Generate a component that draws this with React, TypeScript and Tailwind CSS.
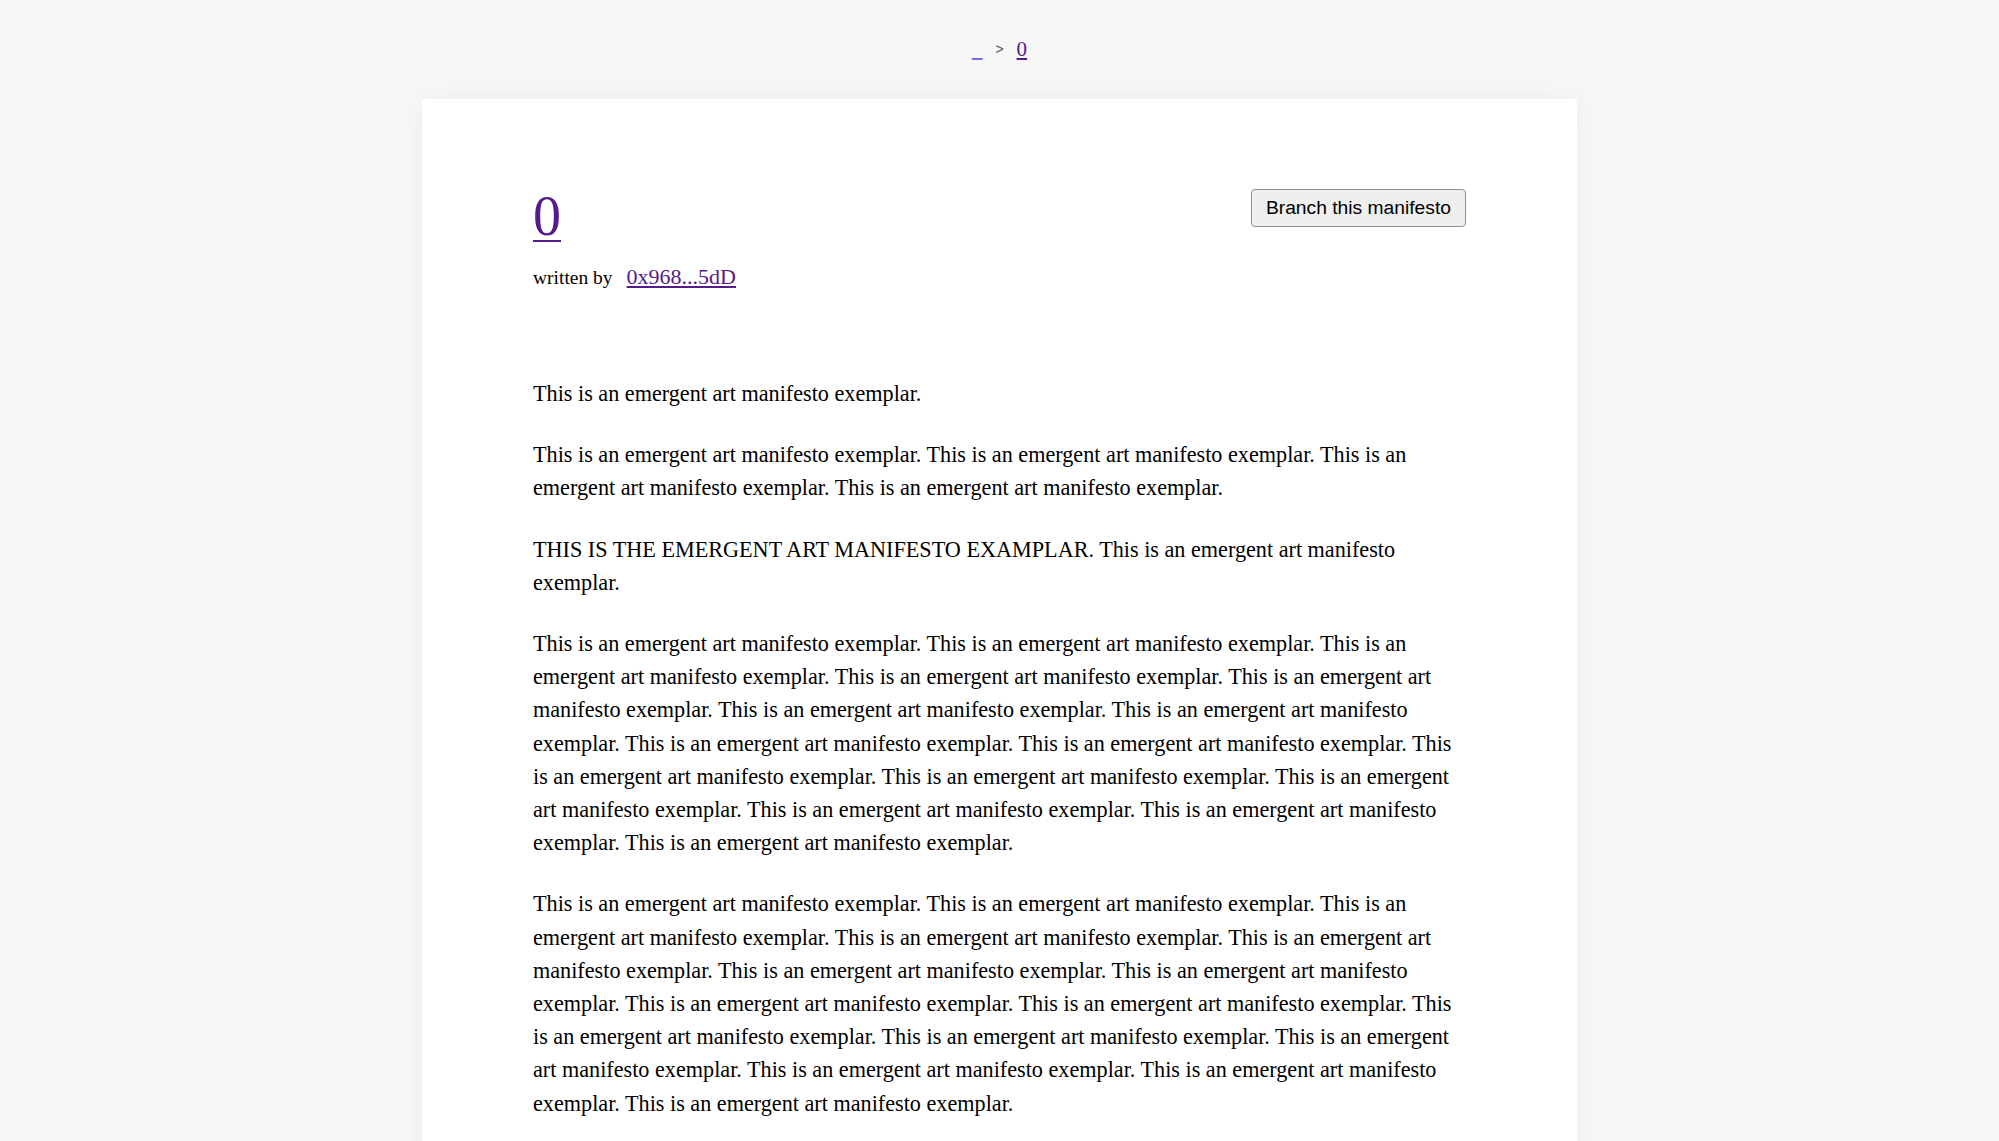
import React from "react";

const S = "This is an emergent art manifesto exemplar.";
const rep = (n: number) => Array.from({ length: n }, () => S).join(" ");

export default function App() {
  const serif = { fontFamily: '"Liberation Serif", "Times New Roman", serif' };
  const paragraphs = [
    rep(1),
    rep(4),
    "THIS IS THE EMERGENT ART MANIFESTO EXAMPLAR. " + rep(1),
    rep(15),
    rep(15),
  ];
  return (
    <div className="min-h-screen bg-[#f7f7f7] text-black" style={serif}>
      <nav className="flex h-[99px] items-start justify-center pt-[37px] text-[21px] leading-[24px]">
        <a href="#" className="text-[#6f6ff0] underline">_</a>
        <span
          className="mx-[13px] text-[14px] text-[#555]"
          style={{ fontFamily: '"Liberation Sans", Arial, sans-serif' }}
        >
          &gt;
        </span>
        <a href="#" className="text-[#551a8b] underline">0</a>
      </nav>
      <main className="mx-auto w-[1155px] bg-white px-[111px] pt-[89px] pb-[60px] shadow-[0_0_24px_rgba(0,0,0,0.05)]">
        <div className="flex items-start justify-between">
          <div>
            <h1 className="text-[56px] leading-[56px]">
              <a href="#" className="text-[#551a8b] underline decoration-[2px] underline-offset-[5px]">0</a>
            </h1>
            <div className="mt-[16px] flex items-baseline leading-[33px]">
              <span className="text-[19.5px]">written by</span>
              <a href="#" className="ml-[14px] text-[22px] text-[#551a8b] underline">0x968...5dD</a>
            </div>
          </div>
          <button
            className="mt-[1px] h-[38px] rounded-[4px] border border-[#8f8f8f] bg-[#efefef] px-[14px] text-[19.25px] text-black"
            style={{ fontFamily: '"Liberation Sans", Arial, sans-serif' }}
          >
            Branch this manifesto
          </button>
        </div>
        <div className="mt-[83px] text-[22.2px] leading-[33.2px]">
          {paragraphs.map((p, i) => (
            <p key={i} className="mb-[28px]">
              {p}
            </p>
          ))}
        </div>
      </main>
    </div>
  );
}
